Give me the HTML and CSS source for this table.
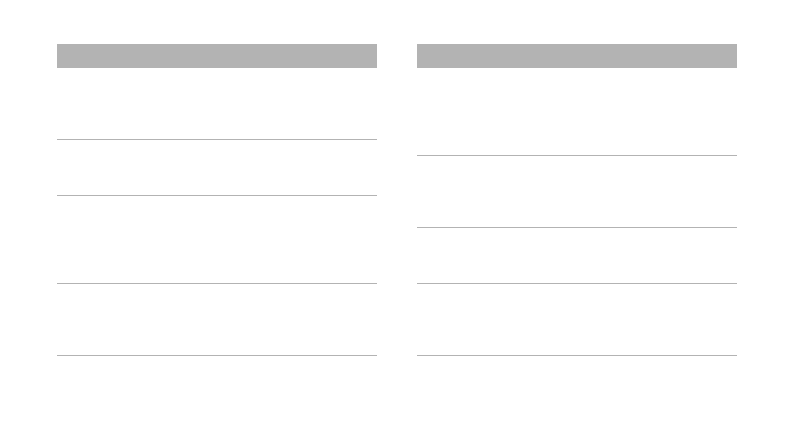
FILE: index.html
```html
<!DOCTYPE html>
<html lang="en">
<head>
<meta charset="utf-8">
<title>Tables</title>
<link rel="stylesheet" href="styles.css">
</head>
<body>
<main class="page">
  <section class="panel">
    <div class="panel-head"></div>
    <div class="row row-m"></div>
    <div class="row row-s"></div>
    <div class="row row-l"></div>
    <div class="row row-m"></div>
  </section>
  <section class="panel">
    <div class="panel-head"></div>
    <div class="row row-l"></div>
    <div class="row row-m"></div>
    <div class="row row-s"></div>
    <div class="row row-m"></div>
  </section>
</main>
</body>
</html>
```
FILE: styles.css
```css
html, body {
  margin: 0;
  padding: 0;
  background: #ffffff;
  font-family: "Liberation Sans", Arial, sans-serif;
}
.page {
  display: flex;
  justify-content: center;
  gap: 40px;
  padding-top: 44px;
}
.panel {
  width: 320px;
  display: flex;
  flex-direction: column;
}
.panel-head {
  height: 24px;
  background: #b3b3b3;
}
.row {
  border-bottom: 1px solid #b3b3b3;
}
.row-s { height: 55px; }
.row-m { height: 71px; }
.row-l { height: 87px; }
```
